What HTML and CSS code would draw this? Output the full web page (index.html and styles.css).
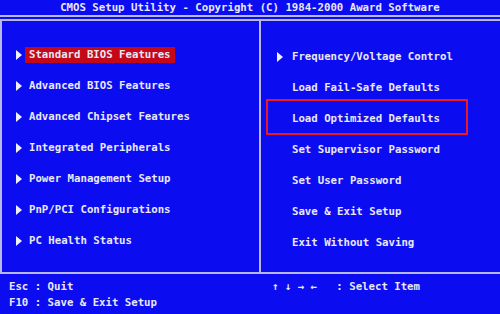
FILE: index.html
```html
<!DOCTYPE html>
<html>
<head>
<meta charset="utf-8">
<link rel="stylesheet" href="styles.css">
</head>
<body>
<div class="screen">
  <div class="title">CMOS Setup Utility - Copyright (C) 1984-2000 Award Software</div>
  <div class="rule"></div>
  <div class="main">
    <ul class="menu menu-left">
      <li class="item"><span class="mark arrow"></span><span class="label selected">Standard BIOS Features</span></li>
      <li class="item"><span class="mark arrow"></span><span class="label">Advanced BIOS Features</span></li>
      <li class="item"><span class="mark arrow"></span><span class="label">Advanced Chipset Features</span></li>
      <li class="item"><span class="mark arrow"></span><span class="label">Integrated Peripherals</span></li>
      <li class="item"><span class="mark arrow"></span><span class="label">Power Management Setup</span></li>
      <li class="item"><span class="mark arrow"></span><span class="label">PnP/PCI Configurations</span></li>
      <li class="item"><span class="mark arrow"></span><span class="label">PC Health Status</span></li>
    </ul>
    <ul class="menu menu-right">
      <li class="item"><span class="mark arrow"></span><span class="label">Frequency/Voltage Control</span></li>
      <li class="item"><span class="mark"></span><span class="label">Load Fail-Safe Defaults</span></li>
      <li class="item marked"><span class="mark"></span><span class="label">Load Optimized Defaults</span><span class="annot"></span></li>
      <li class="item"><span class="mark"></span><span class="label">Set Supervisor Password</span></li>
      <li class="item"><span class="mark"></span><span class="label">Set User Password</span></li>
      <li class="item"><span class="mark"></span><span class="label">Save &amp; Exit Setup</span></li>
      <li class="item"><span class="mark"></span><span class="label">Exit Without Saving</span></li>
    </ul>
  </div>
  <div class="footer">
    <div class="help help-left">
      <div class="line">Esc : Quit</div>
      <div class="line">F10 : Save &amp; Exit Setup</div>
    </div>
    <div class="help help-right">
      <div class="line">↑ ↓ → ←   : Select Item</div>
    </div>
  </div>
</div>
</body>
</html>
```

FILE: styles.css
```css
html, body {
  margin: 0;
  padding: 0;
  background: #0c0cf0;
}

.screen {
  width: 500px;
  height: 314px;
  background: #0c0cf0;
  color: #e8e8f6;
  font-family: "DejaVu Sans Mono", "Liberation Mono", monospace;
  font-weight: bold;
  font-size: 10.7px;
  overflow: hidden;
}

.title {
  height: 15px;
  line-height: 15px;
  text-align: center;
  white-space: pre;
}

.rule {
  height: 2px;
  border-top: 2px solid #b8b8e4;
  border-bottom: 2px solid #b8b8e4;
}

.main {
  display: grid;
  grid-template-columns: 261px 1fr;
  height: 251px;
  border-bottom: 2px solid #b8b8e4;
}

.menu {
  list-style: none;
  margin: 0;
  display: flex;
  flex-direction: column;
}

.menu-left {
  padding: 18px 0 0 14px;
  border-left: 2px solid #b8b8e4;
  border-right: 2px solid #b8b8e4;
}

.menu-right {
  padding: 20px 0 0 16px;
}

.item {
  height: 31px;
  display: flex;
  align-items: center;
  white-space: pre;
}

.menu-left .item {
  gap: 3px;
}

.menu-right .item {
  gap: 9px;
}

.mark {
  width: 6px;
  height: 10px;
  flex: none;
}

.arrow {
  width: 0;
  height: 0;
  border-left: 6px solid #f0f0fa;
  border-top: 5px solid transparent;
  border-bottom: 5px solid transparent;
}

.label {
  padding: 0 4px;
  height: 16px;
  line-height: 16px;
}

.menu-right .label {
  padding: 0;
}

.selected {
  background: #c40818;
}

.marked {
  position: relative;
}

.annot {
  position: absolute;
  left: -11px;
  top: -4px;
  width: 198px;
  height: 32px;
  border: 2px solid #ee1820;
}

.footer {
  display: grid;
  grid-template-columns: 261px 1fr;
}

.help {
  padding-top: 5px;
  line-height: 16px;
}

.line {
  white-space: pre;
}

.help-left {
  padding-left: 9px;
}

.help-right {
  padding-left: 11px;
}
```
